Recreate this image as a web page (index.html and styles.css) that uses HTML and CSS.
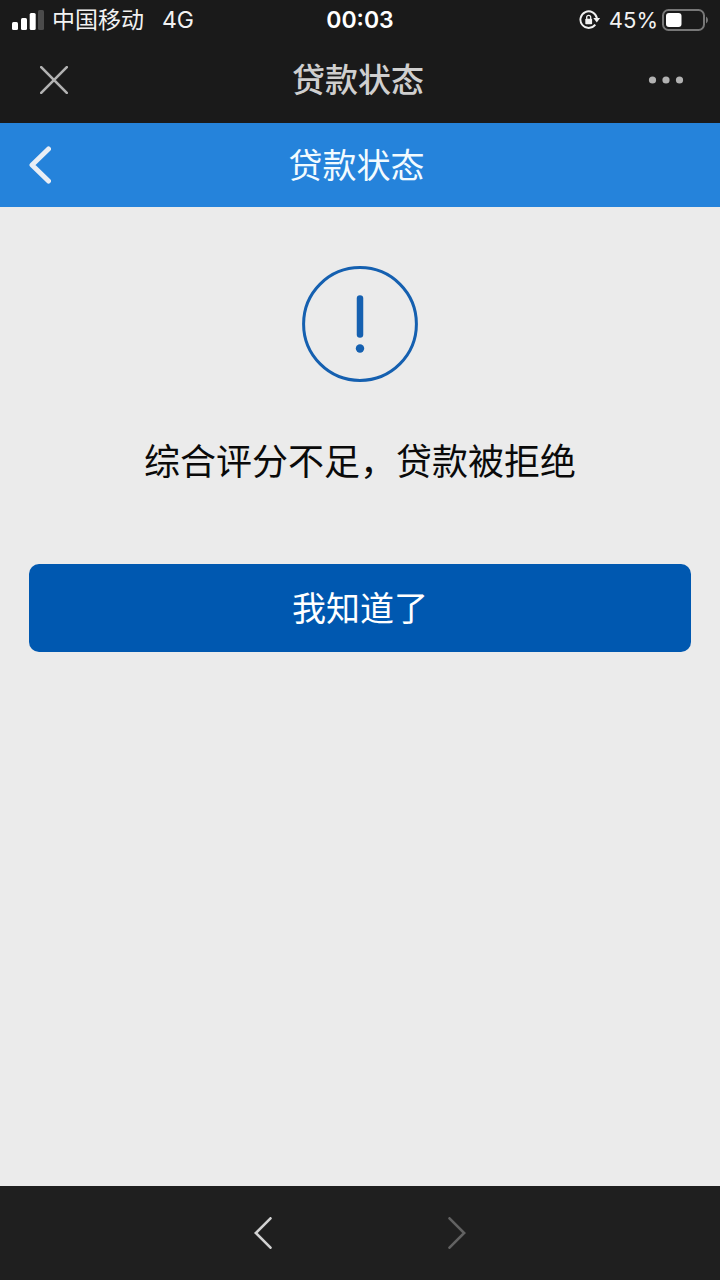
FILE: index.html
```html
<!DOCTYPE html>
<html lang="zh-CN">
<head>
<meta charset="utf-8">
<meta name="viewport" content="width=device-width, initial-scale=1">
<title>贷款状态</title>
<link rel="stylesheet" href="styles.css">
</head>
<body>
<div class="screen">
  <div class="status-bar">
    <div class="status-left">
      <svg class="signal" width="32" height="20" viewBox="0 0 32 20" aria-hidden="true">
        <rect x="0" y="12" width="6" height="8" rx="1.5" fill="#fff"/>
        <rect x="9" y="8" width="6" height="12" rx="1.5" fill="#fff"/>
        <rect x="17.700" y="3" width="6" height="17" rx="1.500" fill="#fff"/>
        <rect x="26" y="0" width="6" height="20" rx="1.500" fill="#4b4b4b"/>
      </svg>
      <span class="carrier">中国移动</span>
      <span>4G</span>
    </div>
    <div class="clock">00:03</div>
    <div class="status-right">
      <svg width="22" height="20" viewBox="0 0 22 20" fill="none" aria-hidden="true">
        <path d="M16.300 14.700A8.300 8.300 0 1 1 17.900 8.200" stroke="#f2f2f2" stroke-width="1.900"/>
        <path d="M14.300 8h6.800L17.800 12.400z" fill="#f2f2f2"/>
        <rect x="6.300" y="8.800" width="6.800" height="5.400" rx=".8" fill="#f2f2f2"/>
        <path d="M7.700 9.200V7.300a2 2 0 0 1 4 0v1.900" stroke="#f2f2f2" stroke-width="1.300"/>
      </svg>
      <span class="percent">45%</span>
      <svg width="46" height="22" viewBox="0 0 46 22" aria-hidden="true">
        <rect x="1" y="1" width="41" height="20" rx="5.500" fill="none" stroke="#777" stroke-width="2"/>
        <rect x="4" y="4" width="15.500" height="14" rx="3" fill="#fff"/>
        <path d="M44 7.500q2 1 2 3.500t-2 3.500z" fill="#777"/>
      </svg>
    </div>
  </div>
  <header class="nav-bar">
    <button class="icon-button" type="button" aria-label="关闭">
      <svg width="28" height="28" viewBox="0 0 28 28" aria-hidden="true"><path d="M1.200 1.200l25.600 25.600M26.800 1.200L1.200 26.800" stroke="#b2b2b2" stroke-width="2.600" stroke-linecap="round"/></svg>
    </button>
    <div class="nav-title">贷款状态</div>
    <button class="icon-button more" type="button" aria-label="更多">
      <svg width="36" height="8" viewBox="0 0 36 8" fill="#b2b2b2" aria-hidden="true"><circle cx="4.500" cy="4" r="3.600"/><circle cx="18" cy="4" r="3.600"/><circle cx="31.500" cy="4" r="3.600"/></svg>
    </button>
  </header>
  <div class="page-header">
    <button class="icon-button" type="button" aria-label="返回">
      <svg width="22" height="38" viewBox="0 0 22 38" fill="none" aria-hidden="true"><path d="M19.500 3L3 19l16.500 16" stroke="#e9eef5" stroke-width="5" stroke-linecap="round" stroke-linejoin="round"/></svg>
    </button>
    <h1 class="page-title">贷款状态</h1>
  </div>
  <main class="content">
    <svg width="116" height="116" viewBox="0 0 116 116" fill="none" stroke="#1560b0" aria-hidden="true">
      <circle cx="58" cy="58" r="56.400" stroke-width="3"/>
      <path d="M58 32.500v36" stroke-width="6.500" stroke-linecap="round"/>
      <circle cx="58" cy="82.500" r="4.200" fill="#1560b0" stroke="none"/>
    </svg>
    <p class="message">综合评分不足，贷款被拒绝</p>
    <button class="confirm" type="button">我知道了</button>
  </main>
  <footer class="toolbar">
    <button class="icon-button" type="button" aria-label="后退">
      <svg width="18" height="32" viewBox="0 0 18 32" fill="none" aria-hidden="true"><path d="M16.500 1.300L1.800 16l14.700 14.700" stroke="#d2d2d2" stroke-width="2.600" stroke-linecap="round"/></svg>
    </button>
    <button class="icon-button" type="button" aria-label="前进" disabled>
      <svg width="18" height="32" viewBox="0 0 18 32" fill="none" aria-hidden="true"><path d="M1.500 1.300L16.200 16 1.500 30.700" stroke="#626262" stroke-width="2.600" stroke-linecap="round"/></svg>
    </button>
  </footer>
</div>
</body>
</html>
```
FILE: styles.css
```css
* { box-sizing: border-box; }
body {
  margin: 0;
  font-family: Inter, "Noto Sans CJK SC", sans-serif;
  background: #ebebeb;
  color: #0a0a0a;
}
button { font: inherit; border: 0; cursor: pointer; }
svg { display: block; flex: none; }
.screen {
  min-height: 100vh;
  display: flex;
  flex-direction: column;
}
.status-bar {
  display: grid;
  grid-template-columns: 1fr auto 1fr;
  align-items: center;
  height: 40px;
  padding: 0 12px;
  background: #1a1a1a;
  color: #f2f2f2;
  font-size: 23px;
  line-height: 40px;
}
.status-left, .status-right {
  display: flex;
  align-items: center;
}
.carrier { margin: 0 18px 0 8px; }
.clock { font-weight: 600; color: #fff; }
.status-right { justify-content: flex-end; }
.percent {
  margin: 0 4px 0 8px;
  font-size: 22px;
}
.nav-bar, .page-header {
  display: grid;
  grid-template-columns: 1fr auto 1fr;
  align-items: center;
}
.nav-bar {
  height: 83px;
  padding: 0 36px 3px 40px;
  background: #1a1a1a;
}
.nav-title {
  margin-right: 8px;
  color: #cfcfcf;
  font-size: 33px;
  font-weight: 500;
  line-height: 48px;
}
.icon-button {
  justify-self: start;
  padding: 0;
  background: none;
}
.more { justify-self: end; }
.page-header {
  height: 84px;
  padding: 0 36px 0 29px;
  background: #2583db;
}
.page-title {
  margin: 0;
  padding-top: 2px;
  color: #f2fbff;
  font-size: 34px;
  font-weight: 400;
  line-height: 48px;
}
.content {
  flex: 1;
  display: flex;
  flex-direction: column;
  align-items: center;
  padding: 59px 29px;
}
.message {
  margin: 53px 0 75px;
  font-size: 36px;
  line-height: 54px;
  text-align: center;
}
.confirm {
  width: 100%;
  height: 88px;
  padding: 0 0 4px;
  border-radius: 10px;
  background: #0058b0;
  color: #fff;
  font-size: 34px;
}
.toolbar {
  display: flex;
  justify-content: center;
  align-items: center;
  gap: 176px;
  height: 94px;
  background: #1f1f1f;
}
```
